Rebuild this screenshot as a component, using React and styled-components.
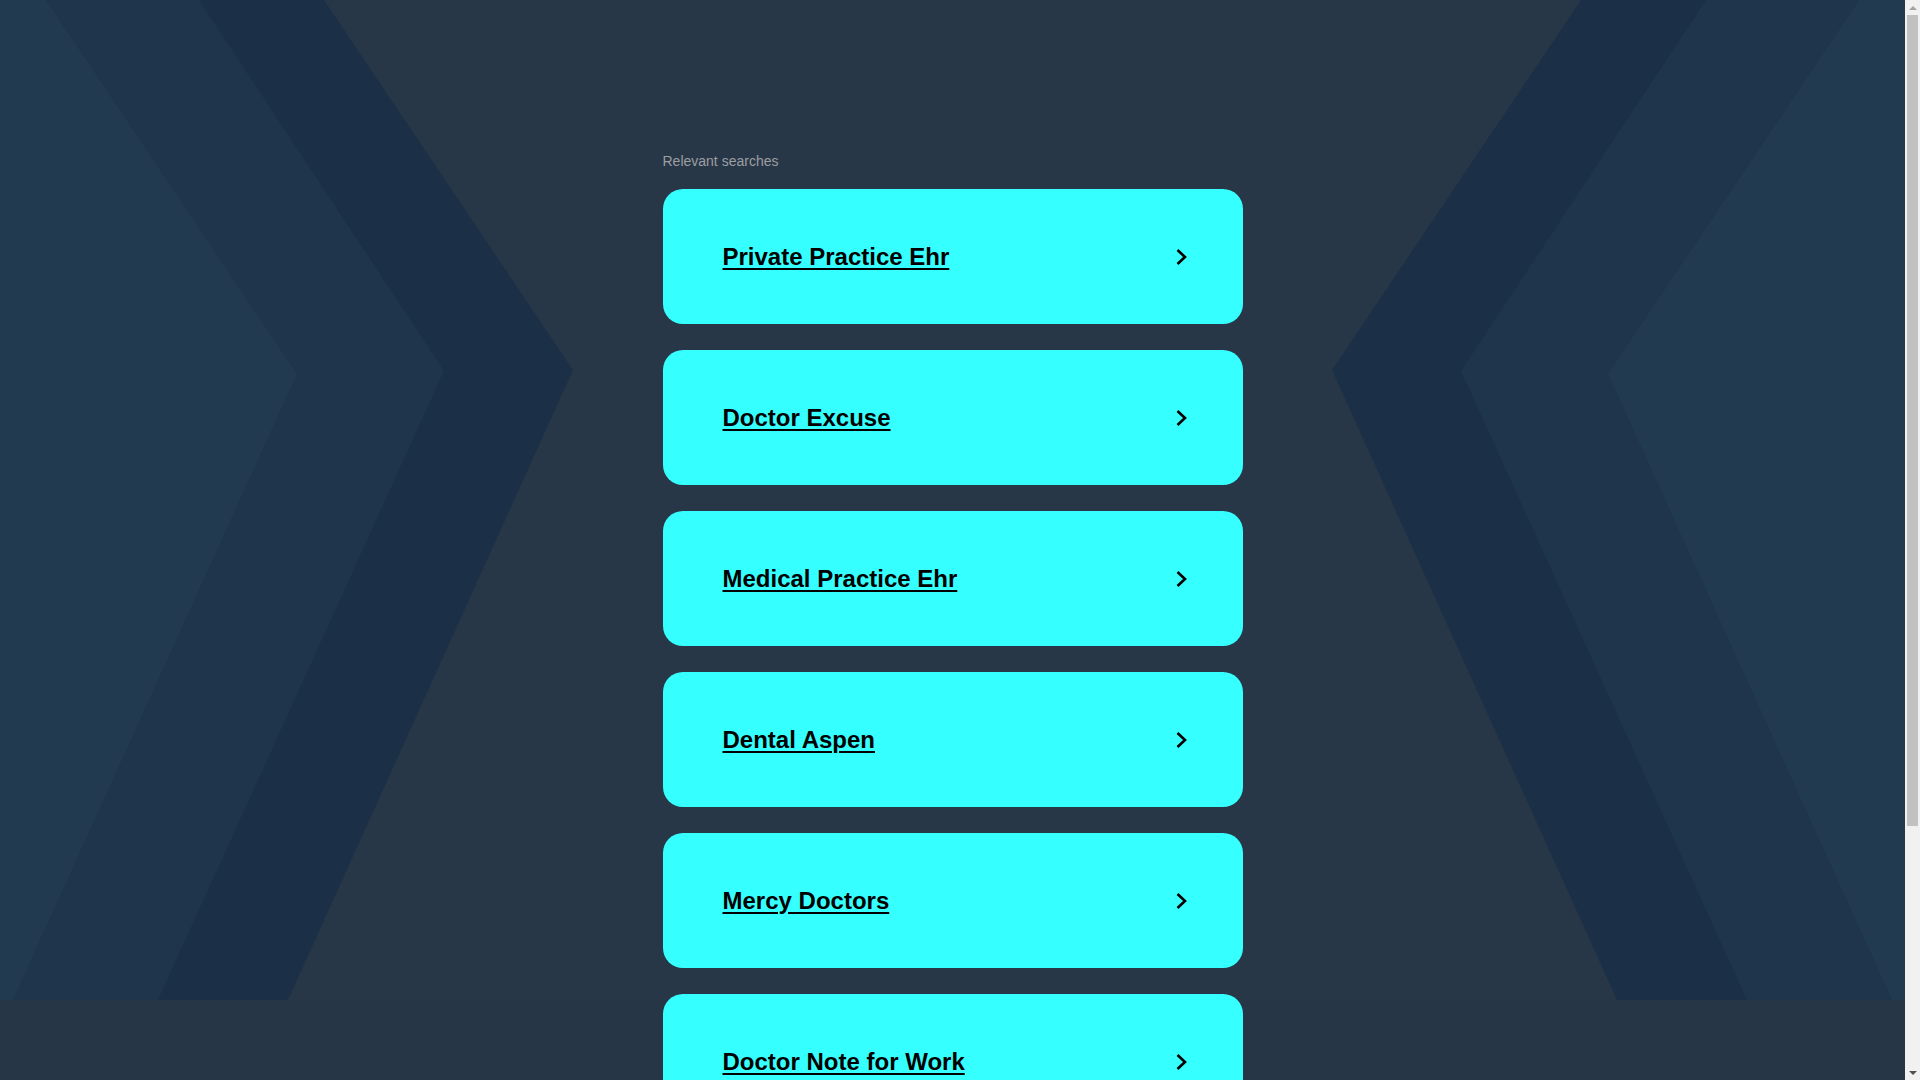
import styled, { createGlobalStyle } from 'styled-components';

const GlobalStyle = createGlobalStyle`
    html, body {
        margin: 0;
        padding: 0;
        background: #273646;
        font-family: "Liberation Sans", Arial, sans-serif;
        overflow-x: hidden;
    }
    html::-webkit-scrollbar {
        display: none;
    }
`;

const searches = [
    'Private Practice Ehr',
    'Doctor Excuse',
    'Medical Practice Ehr',
    'Dental Aspen',
    'Mercy Doctors',
    'Doctor Note for Work',
];

const W = 1905;
const left = {
    outer: [[0, 0], [324, 0], [573, 370], [288, 1000], [0, 1000]],
    middle: [[0, 0], [199, 0], [444, 371], [158, 1000], [0, 1000]],
    inner: [[0, 0], [46, 0], [297, 374], [13, 1000], [0, 1000]],
};
const pts = (list, mirror) =>
    list.map(([x, y]) => `${mirror ? W - x : x},${y}`).join(' ');

const Chevrons = () => (
    <svg width="100%" height="100%" viewBox={`0 0 ${W} 1000`} preserveAspectRatio="none">
        <rect width={W} height="1000" fill="#283748" />
        {[false, true].map((m) => (
            <g key={String(m)}>
                <polygon points={pts(left.outer, m)} fill="#1b3046" />
                <polygon points={pts(left.middle, m)} fill="#1e354b" />
                <polygon points={pts(left.inner, m)} fill="#213a50" />
            </g>
        ))}
    </svg>
);

const Arrow = () => (
    <svg width="12" height="18" viewBox="0 0 12 18">
        <polyline points="2.5,2 10,9 2.5,16" fill="none" stroke="#000" strokeWidth="2.6" strokeLinejoin="miter" />
    </svg>
);

const App = () => {
    return (
        <Page>
            <GlobalStyle />
            <Backdrop>
                <Chevrons />
            </Backdrop>
            <Content>
                <Label>Relevant searches</Label>
                <List>
                    {searches.map((s) => (
                        <Card key={s} href="#">
                            <CardText>{s}</CardText>
                            <Arrow />
                        </Card>
                    ))}
                </List>
            </Content>
            <ScrollTrack>
                <ScrollArrow up />
                <ScrollThumb />
                <ScrollArrow />
            </ScrollTrack>
        </Page>
    );
};
export default App;

const Page = styled.div`
    position: relative;
    width: calc(100% - 15px);
    min-height: 100vh;
`;
const Backdrop = styled.div`
    position: absolute;
    top: 0;
    left: 0;
    width: 100%;
    height: 1000px;
    z-index: 0;
    svg {
        display: block;
    }
`;
const Content = styled.div`
    position: relative;
    z-index: 1;
    width: 580px;
    margin: 0 auto;
    padding: 152px 0 271px;
`;
const Label = styled.div`
    font-size: 14px;
    line-height: 18px;
    color: #9c9ea2;
    margin-bottom: 19px;
`;
const List = styled.div`
    display: flex;
    flex-direction: column;
    gap: 26px;
`;
const Card = styled.a`
    display: flex;
    align-items: center;
    justify-content: space-between;
    height: 135px;
    padding: 0 56px 0 60px;
    box-sizing: border-box;
    background: #36ffff;
    border-radius: 20px;
    color: #000;
    text-decoration: none;
`;
const CardText = styled.span`
    font-size: 24px;
    font-weight: bold;
    text-decoration: underline;
    text-decoration-thickness: 2px;
    text-underline-offset: 3px;
`;
const ScrollTrack = styled.div`
    position: fixed;
    top: 0;
    right: 0;
    width: 15px;
    height: 100vh;
    background: #f1f1f1;
    display: flex;
    flex-direction: column;
    align-items: center;
    z-index: 5;
`;
const ScrollThumb = styled.div`
    width: 11px;
    height: 811px;
    background: #c1c1c1;
`;
const ScrollArrow = styled.div`
    width: 15px;
    height: 15px;
    display: flex;
    align-items: center;
    justify-content: center;
    margin-top: ${(p) => (p.up ? '0' : 'auto')};
    &::before {
        content: '';
        border-left: 4px solid transparent;
        border-right: 4px solid transparent;
        ${(p) => (p.up ? 'border-bottom: 4px solid #a3a3a3;' : 'border-top: 4px solid #505050;')}
    }
`;
